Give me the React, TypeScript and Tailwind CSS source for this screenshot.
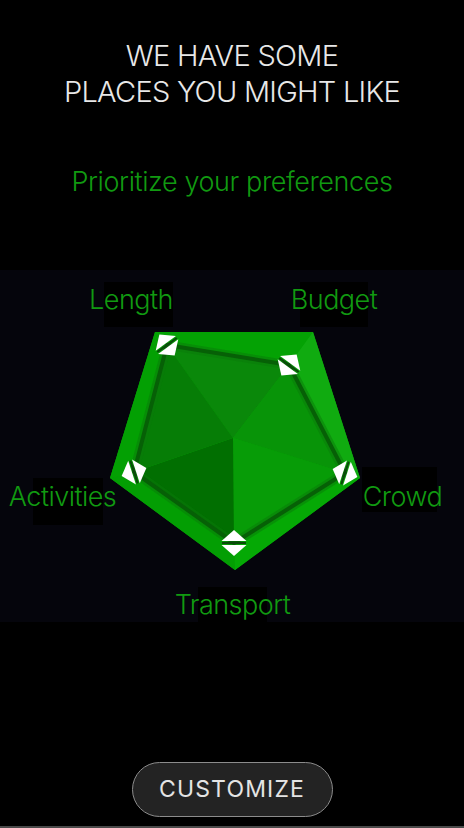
import React from "react";

type P = [number, number];

const C: P = [233, 438];
const outer: P[] = [
  [155, 332],
  [313, 332],
  [360, 478],
  [235, 570],
  [110, 478],
];
const inner: P[] = [
  [167, 345],
  [289, 365],
  [345, 473],
  [234, 543],
  [134, 472],
];
const facetColors = ["#0a880a", "#089408", "#079c07", "#016f01", "#067d06"];
const bandColors = ["#04a204", "#10ab10", "#05a905", "#039e03", "#03a003"];
const handleRot = [144, 216, 288, 0, 72];

const labels = [
  { t: "Length", x: 131, y: 309, box: [104, 282, 69, 45] },
  { t: "Budget", x: 334, y: 309, box: [300, 282, 68, 45] },
  { t: "Crowd", x: 402.5, y: 506, box: [362, 467, 75, 45] },
  { t: "Transport", x: 232.5, y: 614, box: [198, 587, 69, 35] },
  { t: "Activities", x: 62.5, y: 506, box: [33, 478, 70, 47] },
];

const pts = (a: P[]) => a.map((p) => p.join(",")).join(" ");

function Handle({ x, y, r }: { x: number; y: number; r: number }) {
  return (
    <g transform={`translate(${x} ${y}) rotate(${r})`}>
      <polygon points="0,-13 -12.5,-2 12.5,-2" fill="#ffffff" />
      <polygon points="-12.5,2 12.5,2 0,13" fill="#ffffff" />
      <line x1="-12" y1="0" x2="12" y2="0" stroke="#0a4a0a" strokeWidth="2" />
    </g>
  );
}

function Chart() {
  return (
    <svg width="464" height="352" viewBox="0 270 464 352" className="block">
      {labels.map((l) => (
        <rect key={"r" + l.t} x={l.box[0]} y={l.box[1]} width={l.box[2]} height={l.box[3]} fill="#000000" />
      ))}
      <polygon points={pts(outer)} fill="#05a505" />
      {outer.map((o, i) => {
        const o2 = outer[(i + 1) % 5];
        const i1 = inner[i];
        const i2 = inner[(i + 1) % 5];
        return <polygon key={"b" + i} points={pts([o, o2, i2, i1])} fill={bandColors[i]} />;
      })}
      {inner.map((p, i) => {
        const p2 = inner[(i + 1) % 5];
        return <polygon key={"f" + i} points={pts([C, p, p2])} fill={facetColors[i]} />;
      })}
      <polygon
        points={pts(inner)}
        fill="none"
        stroke="#0a7a0a"
        strokeWidth="9"
        strokeLinejoin="round"
        opacity="0.5"
      />
      <polygon
        points={pts(inner)}
        fill="none"
        stroke="#066006"
        strokeWidth="4"
        strokeLinejoin="round"
      />
      {inner.map((p, i) => (
        <Handle key={"h" + i} x={p[0]} y={p[1]} r={handleRot[i]} />
      ))}
      {labels.map((l) => (
        <text
          key={"t" + l.t}
          x={l.x}
          y={l.y}
          textAnchor="middle"
          fill="#119a11"
          fontSize="27"
          fontWeight="300"
          letterSpacing="-0.54"
          fontFamily="Inter, 'Liberation Sans', sans-serif"
        >
          {l.t}
        </text>
      ))}
    </svg>
  );
}

export default function App() {
  return (
    <div
      className="w-[464px] h-[828px] bg-black flex flex-col overflow-hidden"
      style={{ fontFamily: "Inter, 'Liberation Sans', sans-serif" }}
    >
      <div className="pt-[38px] text-center text-[#e8e8e8] text-[29px] leading-[36px] font-light tracking-[-0.025em]">
        <div>WE HAVE SOME</div>
        <div>PLACES YOU MIGHT LIKE</div>
      </div>
      <div className="mt-[56px] text-center text-[#119a11] text-[27px] leading-[32px] font-light tracking-[-0.015em]">
        Prioritize your preferences
      </div>
      <div className="mt-[72px] bg-[#05050c]">
        <Chart />
      </div>
      <div className="flex-1" />
      <div className="flex justify-center">
        <button className="w-[201px] h-[55px] rounded-full bg-[#232323] border-[1.5px] border-[#8c8c8c] text-[#e4e4e4] text-[23px] leading-none tracking-[0.05em]">
          CUSTOMIZE
        </button>
      </div>
      <div className="h-[9px]" />
      <div className="h-[2px] bg-[#4a4a4a]" />
    </div>
  );
}
